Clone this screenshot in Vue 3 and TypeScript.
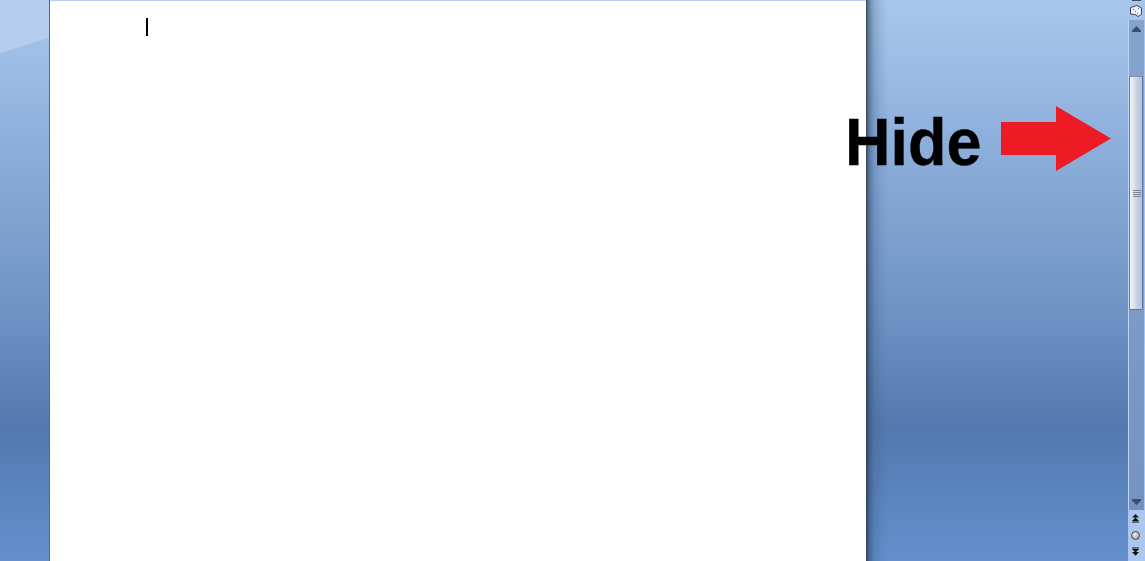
<script setup lang="ts">
const title: string = 'Hide'
</script>

<template>
  <div class="window">
    <div class="workspace">
      <div class="gutter">
        <div class="gloss"></div>
      </div>
      <div class="page">
        <span class="caret"></span>
      </div>
      <div class="page-shadow"></div>
      <div class="spacer"></div>
    </div>

    <aside class="scrollbar">
      <div class="ruler-toggle">
        <span class="sliver"></span>
        <svg width="12" height="12" viewBox="0 0 12 12">
          <path d="M.5 2.500 L7 .5 L11.500 3 L11.500 9.500 L8 11.500 L5 9.500 L.5 9 Z" fill="#eef1f5" stroke="#39465c" stroke-width="1" />
          <path d="M3 4 L4 5 M5 6 L6 7 M7 8 L8 9 M8 3.500 L9 3.500" stroke="#5b6678" stroke-width="1" />
        </svg>
      </div>
      <div class="track">
        <button class="arrow-btn">
          <svg width="9" height="6" viewBox="0 0 9 6"><path d="M4.500 0 L9 4.500 L9 6 L0 6 L0 4.500 Z" fill="#3a4f72" /></svg>
        </button>
        <div class="rail-top"></div>
        <div class="thumb">
          <div class="grip">
            <i></i><i></i><i></i><i></i>
          </div>
        </div>
        <div class="rail-bottom"></div>
        <button class="arrow-btn">
          <svg width="9" height="6" viewBox="0 0 9 6"><path d="M0 0 L9 0 L9 1.500 L4.500 6 L0 1.500 Z" fill="#3a4f72" /></svg>
        </button>
      </div>
      <div class="browse">
        <svg width="9" height="9" viewBox="0 0 9 9"><path d="M4.500 0 L8 3.500 L1 3.500 Z M4.500 3.500 L8 7 L1 7 Z M1 7.500 H8 V8.500 H1 Z" fill="#111" /></svg>
        <span class="ball"></span>
        <svg width="9" height="9" viewBox="0 0 9 9"><path d="M1 .5 H8 V1.500 H1 Z M1 2 L8 2 L4.500 5.500 Z M1 5 L8 5 L4.500 8.700 Z" fill="#111" /></svg>
      </div>
    </aside>

    <div class="callout">
      <span class="callout-text">{{ title }}</span>
      <svg class="callout-arrow" width="110" height="65" viewBox="0 0 110 65">
        <path d="M0 16 H55 V0 L110 32.500 L55 65 V49 H0 Z" fill="#ed1c24" />
      </svg>
    </div>
  </div>
</template>

<style>
html, body { margin: 0; padding: 0; overflow: hidden; }
</style>

<style scoped>
.window {
  position: relative;
  display: flex;
  width: 1145px;
  height: 561px;
  overflow: hidden;
  font-family: "Liberation Sans", Arial, sans-serif;
  background: linear-gradient(180deg, #a9c7ed 0%, #8fb0dc 24%, #6e93c4 56%, #5379ae 76%, #5b86c0 90%, #6590cc 100%);
}
.workspace { flex: 1; display: flex; min-width: 0; }
.gutter { width: 49px; position: relative; flex: none; overflow: hidden; border-right: 1px solid #5d6a7c; }
.gloss {
  position: absolute;
  top: 0;
  left: 0;
  right: 0;
  height: 54px;
  background: #b4cdee;
  clip-path: polygon(0 0, 100% 0, 100% 38px, 0 53px);
}
.page {
  width: 816px;
  flex: none;
  background: #fff;
  border-top: 1px solid #b5d0f2;
  box-sizing: border-box;
  padding: 17px 0 0 96px;
}
.caret { display: block; width: 2px; height: 18px; background: #000; }
.page-shadow {
  width: 22px;
  flex: none;
  background: linear-gradient(90deg, rgba(40,50,70,.85) 0, rgba(50,70,100,.55) 3px, rgba(60,90,130,.28) 8px, rgba(60,90,130,.1) 15px, rgba(60,90,130,0) 100%);
}
.spacer { flex: 1; }

.scrollbar {
  width: 17px;
  flex: none;
  display: flex;
  flex-direction: column;
  background: linear-gradient(180deg, #a6c4ec 0%, #a9c7ef 100%);
}
.ruler-toggle {
  height: 20px;
  box-sizing: border-box;
  display: flex;
  flex-direction: column;
  align-items: center;
  gap: 4px;
  padding-right: 1px;
}
.sliver { display: block; width: 9px; height: 1px; background: #3d4a60; }
.track {
  height: 490px;
  margin-right: 1px;
  border-left: 1px solid #bdd4f2;
  display: flex;
  flex-direction: column;
  background: linear-gradient(180deg, #84a3cd 0%, #7d9cc8 50%, #7592c0 100%);
}
.arrow-btn {
  height: 17px;
  padding: 0;
  border: 0;
  background: transparent;
  display: flex;
  align-items: center;
  justify-content: center;
}
.rail-top { height: 39px; }
.rail-bottom { flex: 1; }
.thumb {
  height: 234px;
  box-sizing: border-box;
  margin-right: 1px;
  border: 1px solid #5f79ad;
  border-top-color: #7d8fb4;
  border-radius: 2px;
  background: linear-gradient(90deg, #eef0f7 0%, #dfe5ef 30%, #c6d0e2 60%, #b6c3da 100%);
  display: flex;
  flex-direction: column;
  align-items: center;
  padding-top: 113px;
}
.grip { display: flex; flex-direction: column; gap: 1px; margin-left: 1px; }
.grip i { display: block; width: 8px; height: 1px; background: #7f8794; }
.browse {
  flex: 1;
  display: flex;
  flex-direction: column;
  align-items: center;
  justify-content: space-between;
  padding: 4px 2px 5px 0;
}
.ball {
  width: 7px;
  height: 7px;
  border-radius: 50%;
  border: 1px solid #4a4a4a;
  background: radial-gradient(circle at 40% 35%, #f0f0f0, #8a8a8a);
}

.callout {
  position: absolute;
  left: 845px;
  top: 106px;
  display: flex;
  align-items: flex-start;
  gap: 19px;
}
.callout-text {
  display: block;
  font-size: 63px;
  font-weight: 700;
  line-height: 72px;
  color: #000;
  -webkit-text-stroke: 0.3px #000;
  transform: scaleY(1.065);
  transform-origin: 50% 100%;
  margin-top: 2px;
}
.callout-arrow { display: block; }
</style>
